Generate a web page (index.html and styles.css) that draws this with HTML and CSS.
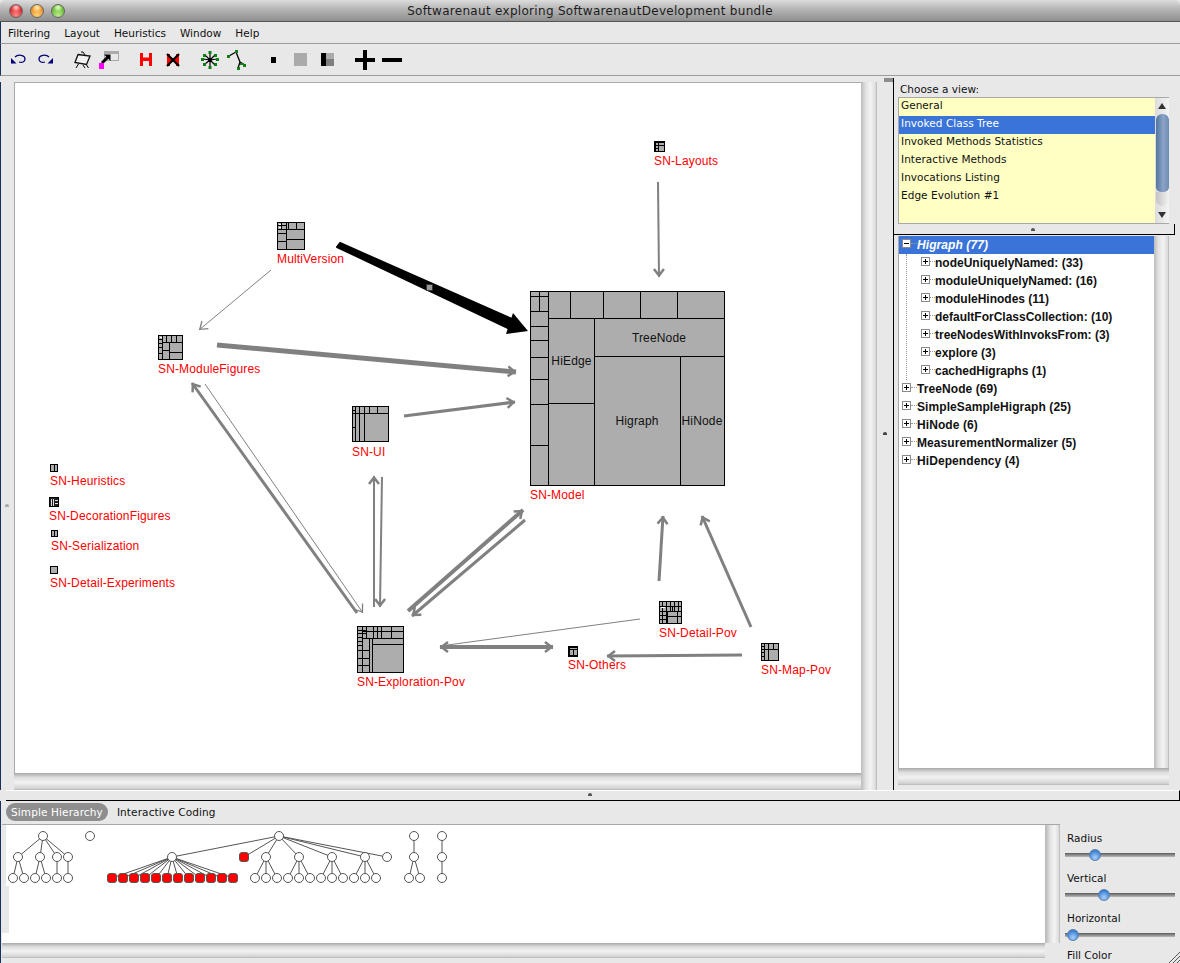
FILE: index.html
```html
<!DOCTYPE html>
<html lang="en">
<head>
<meta charset="utf-8">
<title>Softwarenaut exploring SoftwarenautDevelopment bundle</title>
<link rel="stylesheet" href="styles.css">
</head>
<body>
<div class="window">
  <header class="titlebar">
    <div class="lights"><span class="light red"></span><span class="light orange"></span><span class="light green"></span></div>
    <div class="title">Softwarenaut exploring SoftwarenautDevelopment bundle</div>
    <div></div>
  </header>
  <nav class="menubar">
    <span>Filtering</span><span>Layout</span><span>Heuristics</span><span>Window</span><span>Help</span>
  </nav>
  <div class="toolbar">
    <svg class="t-undo" width="15" height="12" viewBox="0 0 15 12"><path class="navy-s" d="M4 3C7 0 14 1 14 5C14 8 11 9 8 8"/><path class="navy-f" d="M0 4L5.500 9.500H0Z"/></svg>
    <svg class="t-redo" width="15" height="12" viewBox="0 0 15 12"><path class="navy-s" d="M11 3C8 0 1 1 1 5C1 8 4 9 7 8"/><path class="navy-f" d="M15 4L9.500 9.500H15Z"/></svg>
    <svg class="t-easel" width="17" height="18" viewBox="0 0 17 18"><path class="ink" d="M9 1L11 4M9 1L7 1M4.500 13L2 17M9 14L11 17M12 13L14.500 17"/><path class="easel" d="M4 3.500L16 5L12.500 13.500L1 11.500Z"/></svg>
    <svg class="t-arrow" width="20" height="18" viewBox="0 0 20 18"><rect class="frame" x="5.500" y="0.500" width="14" height="9"/><rect class="frame-top" x="5" y="0" width="15" height="3"/><path class="arrow-s" d="M3 12L9 6"/><path class="arrow-f" d="M5 3.500H11.500V10Z"/><rect class="pink" x="0" y="12" width="5" height="6"/></svg>
    <svg class="t-h" width="12" height="13" viewBox="0 0 12 13"><path class="red-f" d="M0 0H3V4.500H9V0H12V13H9V8H3V13H0Z"/></svg>
    <svg class="t-x" width="14" height="14" viewBox="0 0 14 14"><path class="red-f" d="M1 1H4V5H10V1H13V13H10V9H4V13H1Z"/><path class="cross" d="M1 1L13 13M13 1L1 13"/></svg>
    <svg class="t-radial" width="18" height="18" viewBox="0 0 18 18"><path class="ink-thin" d="M9 9L9 2M9 9L14 4M9 9L16 8M9 9L14 14M9 9L9 16M9 9L4 13M9 9L2 8M9 9L4 4"/><circle class="hub" cx="9" cy="9" r="2"/><g class="leafg"><rect x="7.500" y="0" width="3" height="3"/><rect x="13" y="3" width="3" height="3"/><rect x="15" y="7" width="3" height="3"/><rect x="13" y="12" width="3" height="3"/><rect x="7.500" y="15" width="3" height="3"/><rect x="2" y="12" width="3" height="3"/><rect x="0" y="7" width="3" height="3"/><rect x="2" y="3" width="3" height="3"/></g></svg>
    <svg class="t-tree" width="20" height="20" viewBox="0 0 20 20"><path class="ink-thin2" d="M9 2L2 6M9 2L13 12L18 15M13 12L11 18"/><g class="leafg"><rect x="0" y="5" width="3" height="3"/><rect x="8" y="0" width="3" height="3"/><rect x="16" y="14" width="3" height="3"/><rect x="10" y="17" width="3" height="3"/><rect x="13" y="13" width="3" height="2"/></g></svg>
    <svg class="t-small" width="5" height="6" viewBox="0 0 5 6"><rect class="black-f" width="5" height="6"/></svg>
    <svg class="t-gray" width="13" height="13" viewBox="0 0 13 13"><rect class="gray-f" width="13" height="13"/></svg>
    <svg class="t-split" width="13" height="13" viewBox="0 0 13 13"><rect class="gray-f" width="13" height="6"/><rect class="dark-f" y="6" width="13" height="7"/><rect class="black-f" width="5" height="13"/></svg>
    <svg class="t-plus" width="20" height="20" viewBox="0 0 20 20"><path class="black-f" d="M8 0H12V8H20V12H12V20H8V12H0V8H8Z"/></svg>
    <svg class="t-minus" width="20" height="4" viewBox="0 0 20 4"><rect class="black-f" width="20" height="4"/></svg>
  </div>

  <main class="main">
    <section class="left-pane">
      <div class="left-strip"><span class="grip-dot"></span></div>
      <div class="canvas-col">
        <svg class="canvas" width="846" height="690" viewBox="15 83 846 690">
          <defs>
            <marker id="ch" class="mk" markerUnits="userSpaceOnUse" markerWidth="20" markerHeight="20" refX="11.500" refY="10" orient="auto-start-reverse" viewBox="0 0 20 20"><path class="chev" d="M3.500 5L10 10L3.500 15"/></marker>
            <marker id="chs" markerUnits="userSpaceOnUse" markerWidth="20" markerHeight="20" refX="11" refY="10" orient="auto-start-reverse" viewBox="0 0 20 20"><path class="chev thin" d="M3 5L10 10L3 15"/></marker>
          </defs>

          <path class="edge w2" d="M658 182L659 277" marker-end="url(#ch)"/>
          <path class="edge w1" d="M271 270L199 330" marker-end="url(#chs)"/>
          <path class="edge w5" d="M217 345L516 372" marker-end="url(#ch)"/>
          <path class="edge w3" d="M404 416L515 402" marker-end="url(#ch)"/>
          <path class="edge w3" d="M192 383L357 613" marker-start="url(#ch)"/>
          <path class="edge w1" d="M205 384L363 613" marker-end="url(#chs)"/>
          <path class="edge w2" d="M374 476L374 607" marker-start="url(#ch)"/>
          <path class="edge w2" d="M382 477L380 607" marker-end="url(#ch)"/>
          <path class="edge w4" d="M408 611L523 510" marker-end="url(#ch)"/>
          <path class="edge w3" d="M525 520L412 616" marker-end="url(#ch)"/>
          <path class="edge w4" d="M440 647L553 647" marker-start="url(#ch)" marker-end="url(#ch)"/>
          <path class="edge w1" d="M640 619L440 646"/>
          <path class="edge w3" d="M742 655L607 656" marker-end="url(#ch)"/>
          <path class="edge w3" d="M659 581L663 516" marker-end="url(#ch)"/>
          <path class="edge w3" d="M751 627L702 516" marker-end="url(#ch)"/>

          <path class="bigedge" d="M337 247L340 243L512 319L508 328Z"/>
          <path class="bighead" d="M528 331L506 334L513 313Z"/>
          <rect class="bigmark" x="426.500" y="284.500" width="6" height="6"/>

          <!-- SN-Model -->
          <rect class="tm" x="530.500" y="291.500" width="194" height="194"/>
          <path class="tl" d="M548.500 291V485M548.500 318.500H724M570.500 291V318M603.500 291V318M640.500 291V318M677.500 291V318M530 296.500H548M530 311.500H548M530 326.500H548M530 340.500H548M530 357.500H548M530 379.500H548M530 404.500H548M530 445.500H548M539.500 291V311M594.500 318V485M594.500 356.500H724M680.500 356.500V485M548 403.500H594"/>
          <text class="node-name" x="659" y="342">TreeNode</text>
          <text class="node-name" x="571.500" y="365">HiEdge</text>
          <text class="node-name" x="637" y="425">Higraph</text>
          <text class="node-name" x="702" y="425">HiNode</text>

          <!-- MultiVersion -->
          <rect class="tm" x="277.500" y="222.500" width="27" height="27"/>
          <path class="tl" d="M286.500 222V250M286.500 229.500H304M288.500 222V230M296.500 222V230M286.500 239.500H304M278 225.500H286M278 229.500H286M278 233.500H286M278 241.500H286M281.500 222V230"/>
          <rect class="tm-w" x="279" y="224" width="2" height="1"/><rect class="tm-w" x="279" y="227" width="2" height="1"/>

          <!-- SN-ModuleFigures -->
          <rect class="tm" x="158.500" y="335.500" width="24" height="24"/>
          <path class="tl" d="M162.500 335V360M162.500 342.500H182M166.500 335V342M171.500 335V342M176.500 335V342M169.500 342V360M169.500 352.500H182M162 350.500H170M158 339.500H162M158 343.500H162M158 347.500H162M158 353.500H162"/>
          <rect class="tm-w" x="160" y="337" width="2" height="1"/>

          <!-- SN-UI -->
          <rect class="tm" x="352.500" y="406.500" width="36" height="35"/>
          <path class="tl" d="M353 413.500H388M355.500 406V442M359.500 406V442M364.500 406V442M369.500 406V414M377.500 406V414M353 427.500H355M353 410.500H355"/>

          <!-- SN-Exploration-Pov -->
          <rect class="tm" x="357.500" y="626.500" width="46" height="46"/>
          <path class="tl" d="M362.500 626V672M362.500 638.500H403M358 630.500H366M358 633.500H366M366.500 626V638M373.500 626V638M377.500 626V638M381.500 626V638M391.500 626V638M362 631.500H403M369.500 638V672M372.500 638V672M372.500 644.500H403M358 637.500H362M358 641.500H362M358 645.500H362M358 650.500H362M358 658.500H369M358 665.500H369M362 650.500H369"/>

          <!-- SN-Detail-Pov -->
          <rect class="tm" x="659.500" y="601.500" width="22" height="22"/>
          <path class="tl" d="M666.500 601V623M659 606.500H682M670.500 601V612M674.500 601V612M678.500 601V612M662.500 601V623M659 611.500H682M659 615.500H667M659 619.500H667M667 616.500H682M667 612V623M677.500 612V623M672.500 607V612"/>
          <rect class="tm-w" x="661" y="607" width="4" height="1"/>

          <!-- SN-Map-Pov -->
          <rect class="tm" x="761.500" y="643.500" width="17" height="17"/>
          <path class="tl" d="M764.500 643V661M764.500 649.500H778M768.500 643V661M773.500 643V650M761 646.500H765M761 649.500H765M761 652.500H765M761 656.500H765"/>

          <!-- SN-Others -->
          <rect class="tm-b" x="568.800" y="647.200" width="8.800" height="8.800"/>
          <path class="tl" d="M570 649.500H577M573.500 650V656"/>

          <!-- SN-Layouts -->
          <rect class="tm-b" x="654.800" y="141.800" width="9.800" height="9.800"/>
          <path class="tl" d="M655 145.500H664M658.500 142V152M655 148.500H658"/>

          <!-- isolated -->
          <rect class="tm-b" x="50.500" y="464.500" width="7" height="7"/><path class="tl" d="M54.500 464V471"/>
          <rect class="tm-d" x="49.500" y="497.500" width="9" height="9"/><path class="tl-w" d="M51.500 499V506M53.500 499V506M55 500.500H58M55 503.500H58"/>
          <rect class="tm-b" x="51.500" y="530.500" width="6" height="6"/><path class="tl" d="M54.500 530V537"/>
          <rect class="tm-b" x="50.500" y="566.500" width="7" height="7"/>

          <text class="lbl" x="654" y="165">SN-Layouts</text>
          <text class="lbl" x="277" y="263">MultiVersion</text>
          <text class="lbl" x="158" y="373">SN-ModuleFigures</text>
          <text class="lbl" x="352" y="456">SN-UI</text>
          <text class="lbl" x="530" y="499">SN-Model</text>
          <text class="lbl" x="50" y="485">SN-Heuristics</text>
          <text class="lbl" x="49" y="520">SN-DecorationFigures</text>
          <text class="lbl" x="51" y="550">SN-Serialization</text>
          <text class="lbl" x="50" y="587">SN-Detail-Experiments</text>
          <text class="lbl" x="357" y="686">SN-Exploration-Pov</text>
          <text class="lbl" x="568" y="669">SN-Others</text>
          <text class="lbl" x="659" y="637">SN-Detail-Pov</text>
          <text class="lbl" x="761" y="674">SN-Map-Pov</text>
        </svg>
        <div class="hscroll"></div>
      </div>
      <div class="vscroll"></div>
      <div class="vsplit"><span class="vsplit-cap"></span><span class="grip-dot"></span></div>
    </section>

    <aside class="right-pane">
      <div class="choose">Choose a view:</div>
      <div class="list-box">
        <ul class="view-list">
          <li>General</li>
          <li class="sel">Invoked Class Tree</li>
          <li>Invoked Methods Statistics</li>
          <li>Interactive Methods</li>
          <li>Invocations Listing</li>
          <li>Edge Evolution #1</li>
        </ul>
        <div class="list-sb">
          <span class="arrow-up"></span>
          <span class="thumb"></span>
          <span class="thumb-cap"></span>
          <span class="arrow-down"></span>
        </div>
      </div>
      <div class="hsplit-mini"><span class="grip-dot"></span></div>
      <div class="tree-box">
        <div class="tree">
          <div class="row top sel-row"><span class="box minus"></span><span class="dots"></span><span class="name-sel">Higraph (77)</span></div>
          <div class="children">
            <div class="row"><span class="box"></span><span class="dots"></span><span>nodeUniquelyNamed: (33)</span></div>
            <div class="row"><span class="box"></span><span class="dots"></span><span>moduleUniquelyNamed: (16)</span></div>
            <div class="row"><span class="box"></span><span class="dots"></span><span>moduleHinodes (11)</span></div>
            <div class="row"><span class="box"></span><span class="dots"></span><span>defaultForClassCollection: (10)</span></div>
            <div class="row"><span class="box"></span><span class="dots"></span><span>treeNodesWithInvoksFrom: (3)</span></div>
            <div class="row"><span class="box"></span><span class="dots"></span><span>explore (3)</span></div>
            <div class="row"><span class="box"></span><span class="dots"></span><span>cachedHigraphs (1)</span></div>
          </div>
          <div class="row top"><span class="box"></span><span class="dots"></span><span>TreeNode (69)</span></div>
          <div class="row top"><span class="box"></span><span class="dots"></span><span>SimpleSampleHigraph (25)</span></div>
          <div class="row top"><span class="box"></span><span class="dots"></span><span>HiNode (6)</span></div>
          <div class="row top"><span class="box"></span><span class="dots"></span><span>MeasurementNormalizer (5)</span></div>
          <div class="row top"><span class="box"></span><span class="dots"></span><span>HiDependency (4)</span></div>
        </div>
        <div class="vscroll tree-sb"></div>
      </div>
      <div class="hscroll tree-hs"></div>
    </aside>
  </main>

  <div class="hsplit"><span class="grip-dot"></span></div>

  <section class="bottom">
    <div class="bottom-left">
      <div class="tabs"><span class="tab active">Simple Hierarchy</span><span class="tab">Interactive Coding</span></div>
      <div class="tree-area">
        <svg class="forest" width="1043" height="118" viewBox="2 825 1043 118">
          <defs>
            <circle id="n" class="nd" r="4.500"/>
            <rect id="r" class="rd" x="-4.500" y="-4.500" width="9" height="9" rx="2.500"/>
          </defs>
          <rect class="notch" x="2" y="825" width="4" height="108"/>
          <rect class="notch" x="6" y="886" width="3" height="47"/>
          <path class="lk" d="M43 836L18 857M43 836L40 857M43 836L57 857M43 836L68 857M18 857L13 878M18 857L24 878M40 857L35 878M40 857L46 878M57 857V878M68 857V878"/>
          <path class="lk" d="M279 836L172 857M279 836L244 857M279 836L266 857M279 836L299 857M279 836L332 857M279 836L365 857M279 836L387 857"/>
          <path class="lk" d="M172 857L112 878M172 857L123 878M172 857L134 878M172 857L145 878M172 857L156 878M172 857L167 878M172 857L178 878M172 857L189 878M172 857L200 878M172 857L211 878M172 857L222 878M172 857L233 878"/>
          <path class="lk" d="M266 857L255 878M266 857V878M266 857L277 878M299 857L288 878M299 857V878M299 857L310 878M332 857L321 878M332 857V878M332 857L343 878M365 857L354 878M365 857V878M365 857L376 878"/>
          <path class="lk" d="M414 836V857M414 857L409 878M414 857L420 878M442 836V878"/>
          <use href="#n" x="43" y="836"/><use href="#n" x="18" y="857"/><use href="#n" x="40" y="857"/><use href="#n" x="57" y="857"/><use href="#n" x="68" y="857"/>
          <use href="#n" x="13" y="878"/><use href="#n" x="24" y="878"/><use href="#n" x="35" y="878"/><use href="#n" x="46" y="878"/><use href="#n" x="57" y="878"/><use href="#n" x="68" y="878"/>
          <use href="#n" x="90" y="836"/>
          <use href="#n" x="279" y="836"/><use href="#n" x="172" y="857"/><use href="#r" x="244" y="857"/><use href="#n" x="266" y="857"/><use href="#n" x="299" y="857"/><use href="#n" x="332" y="857"/><use href="#n" x="365" y="857"/><use href="#n" x="387" y="857"/>
          <use href="#r" x="112" y="878"/><use href="#r" x="123" y="878"/><use href="#r" x="134" y="878"/><use href="#r" x="145" y="878"/><use href="#r" x="156" y="878"/><use href="#r" x="167" y="878"/><use href="#r" x="178" y="878"/><use href="#r" x="189" y="878"/><use href="#r" x="200" y="878"/><use href="#r" x="211" y="878"/><use href="#r" x="222" y="878"/><use href="#r" x="233" y="878"/>
          <use href="#n" x="255" y="878"/><use href="#n" x="266" y="878"/><use href="#n" x="277" y="878"/><use href="#n" x="288" y="878"/><use href="#n" x="299" y="878"/><use href="#n" x="310" y="878"/><use href="#n" x="321" y="878"/><use href="#n" x="332" y="878"/><use href="#n" x="343" y="878"/><use href="#n" x="354" y="878"/><use href="#n" x="365" y="878"/><use href="#n" x="376" y="878"/>
          <use href="#n" x="414" y="836"/><use href="#n" x="414" y="857"/><use href="#n" x="409" y="878"/><use href="#n" x="420" y="878"/>
          <use href="#n" x="442" y="836"/><use href="#n" x="442" y="857"/><use href="#n" x="442" y="878"/>
        </svg>
        <div class="vscroll forest-sb"></div>
      </div>
      <div class="hscroll forest-hs"></div>
    </div>
    <div class="controls">
      <div class="ctl"><div class="ctl-label">Radius</div><div class="slider"><span class="knob k-radius"></span></div></div>
      <div class="ctl"><div class="ctl-label">Vertical</div><div class="slider"><span class="knob k-vertical"></span></div></div>
      <div class="ctl"><div class="ctl-label">Horizontal</div><div class="slider"><span class="knob k-horizontal"></span></div></div>
      <div class="ctl ctl-fill"><div class="ctl-label">Fill Color</div></div>
      <svg class="resize" width="12" height="12" viewBox="0 0 12 12"><path class="grip" d="M1 12L12 1M5 12L12 5M9 12L12 9"/></svg>
    </div>
  </section>
</div>
</body>
</html>
```

FILE: styles.css
```css
* { box-sizing: border-box; }
html, body { margin: 0; padding: 0; background: #fff; }
body { width: 1180px; height: 963px; overflow: hidden; font-family: "DejaVu Sans", sans-serif; font-size: 10.5px; color: #000; }
ul { list-style: none; margin: 0; padding: 0; }

.window { width: 1180px; height: 963px; display: flex; flex-direction: column; background: #e8e8e8; overflow: hidden; position: relative; }

/* title */
.titlebar { height: 22px; flex: none; display: grid; grid-template-columns: 1fr auto 1fr; align-items: center; padding-top: 1px; background: linear-gradient(#dcdcdc, #b8b8b8 40%, #8e8e8e); border-bottom: 1px solid #555; border-radius: 5px 5px 0 0; }
.lights { display: flex; gap: 7px; padding-left: 9px; }
.light { width: 14px; height: 14px; border-radius: 50%; border: 1px solid #666; }
.light.red { background: radial-gradient(circle at 50% 22%, #ffd6d6, #ff7a7a 22%, transparent 45%), radial-gradient(circle at 50% 85%, #ff8a8a, #d62a2a 65%, #a01c1c); }
.light.orange { background: radial-gradient(circle at 50% 22%, #fff0c8, #ffc870 22%, transparent 45%), radial-gradient(circle at 50% 85%, #ffd27a, #e8902a 65%, #b06a14); }
.light.green { background: radial-gradient(circle at 50% 22%, #e6ffd0, #a8e27a 22%, transparent 45%), radial-gradient(circle at 50% 85%, #b8ec8a, #6cb83a 65%, #468a22); }
.title { font-size: 12px; color: #1c1c1c; letter-spacing: 0.3px; }

/* menu */
.menubar { height: 22px; flex: none; display: flex; gap: 14px; padding: 0 0 0 7px; align-items: center; border-bottom: 1px solid #9c9c9c; border-left: 1px solid #1b2f5c; color: #111; }

/* toolbar */
.toolbar { height: 32px; flex: none; display: flex; align-items: center; padding-left: 10px; border-bottom: 1px solid #9c9c9c; border-left: 1px solid #1b2f5c; }
.toolbar svg { flex: none; display: block; }
.t-redo { margin-left: 12px; }
.t-easel { margin-left: 21px; }
.t-arrow { margin-left: 8px; }
.t-h { margin-left: 21px; }
.t-x { margin-left: 14px; }
.t-radial { margin-left: 21px; }
.t-tree { margin-left: 8px; }
.t-small { margin-left: 24px; }
.t-gray { margin-left: 18px; }
.t-split { margin-left: 14px; }
.t-plus { margin-left: 21px; }
.t-minus { margin-left: 7px; }
.navy-s { fill: none; stroke: #00007a; stroke-width: 1.300; }
.navy-f { fill: #00007a; }
.ink { fill: none; stroke: #000; stroke-width: 1; }
.easel { fill: #f2f2f2; stroke: #111; stroke-width: 1.300; }
.frame { fill: #e8e8e8; stroke: #aaa; }
.frame-top { fill: #aaa; }
.arrow-s { stroke: #000; stroke-width: 3; fill: none; }
.arrow-f { fill: #000; }
.pink { fill: #f0f; }
.red-f { fill: #f00; }
.cross { stroke: #000; stroke-width: 2.200; fill: none; }
.ink-thin { stroke: #000; stroke-width: 1.200; fill: none; }
.ink-thin2 { stroke: #000; stroke-width: 1.300; fill: none; }
.hub { fill: #000; }
.leafg rect { fill: #0a7f12; }
.black-f { fill: #000; }
.gray-f { fill: #aaa; }
.dark-f { fill: #808080; }

/* main */
.main { height: 714px; flex: none; display: flex; }
.left-pane { width: 893px; flex: none; display: flex; padding-top: 6px; }
.left-strip { width: 14px; flex: none; border-left: 1px solid #1b2f5c; display: flex; justify-content: flex-start; padding: 422px 0 0 4px; }
.left-strip .grip-dot { background: #aaa; }
.canvas-col { width: 847px; flex: none; display: flex; flex-direction: column; }
.canvas { display: block; background: #fff; box-sizing: content-box; border-left: 1px solid #aaa; border-top: 1px solid #aaa; }
.hscroll { height: 17px; flex: none; background: linear-gradient(#a8a8a8, #dcdcdc 25%, #f2f2f2 55%, #d4d4d4 90%, #b4b4b4); }
.vscroll { width: 16px; flex: none; background: linear-gradient(90deg, #bcbcbc, #e2e2e2 30%, #f4f4f4 60%, #dcdcdc 90%, #b0b0b0); }
.vsplit { width: 16px; flex: none; display: flex; flex-direction: column; align-items: center; margin-top: -4px; }
.vsplit-cap { width: 9px; height: 4px; background: #8c8c8c; margin-left: 6px; }
.vsplit .grip-dot { margin-top: 350px; margin-left: -1px; background: #444; }
.grip-dot { display: block; width: 4px; height: 3px; background: #555; border-radius: 2px 2px 0 0; }

/* edges */
.edge { fill: none; stroke: #808080; }
.w1 { stroke-width: 1; }
.w2 { stroke-width: 2; }
.w3 { stroke-width: 3; }
.w4 { stroke-width: 4; }
.w5 { stroke-width: 5; }
.chev { fill: none; stroke: #808080; stroke-width: 2.500; }
.chev.thin { stroke-width: 1.300; }
.bigedge { fill: #000; stroke: #000; stroke-width: 2; stroke-linejoin: round; }
.bighead { fill: #000; }
.bigmark { fill: #999; stroke: #333; stroke-width: 1; }

/* treemaps */
.tm { fill: #adadad; stroke: #000; stroke-width: 1; shape-rendering: crispEdges; }
.tm-b { fill: #adadad; stroke: #000; stroke-width: 1.500; shape-rendering: crispEdges; }
.tm-d { fill: #222; stroke: #000; stroke-width: 1; shape-rendering: crispEdges; }
.tm-w { fill: #fff; }
.tl { fill: none; stroke: #000; stroke-width: 1; shape-rendering: crispEdges; }
.tl-w { fill: none; stroke: #ddd; stroke-width: 1; shape-rendering: crispEdges; }
.node-name { font: 12px "Liberation Sans", sans-serif; fill: #111; text-anchor: middle; letter-spacing: 0.15px; }
.lbl { font: 12px "Liberation Sans", sans-serif; fill: #f00; letter-spacing: 0.15px; }

/* right */
.right-pane { width: 287px; flex: none; margin-top: 2px; border-left: 1px solid #000; padding-left: 4px; display: flex; flex-direction: column; }
.choose { height: 19px; padding: 4px 0 0 2px; color: #111; line-height: 14px; }
.list-box { width: 271px; height: 127px; display: flex; border: 1px solid #a8a8a8; margin-right: auto; flex: none; }
.view-list { width: 256px; flex: none; background: #ffffc4; letter-spacing: 0.04px; }
.view-list li { height: 18px; padding-left: 2px; line-height: 15px; color: #111; }
.view-list .sel { background: #3b74d8; color: #fff; }
.list-sb { width: 14px; flex: none; display: flex; flex-direction: column; align-items: center; background: linear-gradient(90deg, #dcdcdc, #f4f4f4); }
.arrow-up, .arrow-down { width: 14px; height: 16px; flex: none; display: flex; align-items: center; justify-content: center; }
.arrow-up::before { content: ""; border: 4px solid transparent; border-bottom: 6px solid #333; border-top: 0; }
.arrow-down::before { content: ""; border: 4px solid transparent; border-top: 6px solid #333; border-bottom: 0; }
.thumb { width: 13px; height: 78px; flex: none; border-radius: 6px 6px 5px 5px; background: linear-gradient(90deg, #54759f, #8ba3c6 55%, #6f8cb2); }
.thumb-cap { width: 13px; height: 14px; flex: none; border-radius: 0 0 7px 7px; background: linear-gradient(90deg, #c4c4c4, #f2f2f2); margin-bottom: 1px; }
.hsplit-mini { height: 11px; margin: 0 0 1px -4px; width: 281px; flex: none; border-right: 1px solid #000; border-bottom: 1px solid #000; display: flex; justify-content: center; align-items: center; padding-right: 3px; background: #e8e8e8; }
.tree-box { width: 271px; height: 532px; flex: none; display: flex; border-left: 1px solid #a8a8a8; }
.tree { width: 255px; flex: none; background: #fff; font: bold 12px "Liberation Sans", sans-serif; color: #111; letter-spacing: 0.08px; }
.tree-sb { width: 15px; }
.tree-hs { width: 271px; }
.row { height: 18px; display: flex; align-items: center; white-space: nowrap; }
.row.top { padding-left: 3px; }
.sel-row { background: #3b74d8; }
.name-sel { color: #fff; font-style: italic; }
.box { width: 9px; height: 9px; flex: none; margin-top: -4px; border: 1px solid #8a8a8a; background: linear-gradient(#000, #000) center / 5px 1px no-repeat, linear-gradient(#000, #000) center / 1px 5px no-repeat, #fff; }
.box.minus { background: linear-gradient(#000, #000) center / 5px 1px no-repeat, #fff; }
.dots { width: 6px; flex: none; margin-top: -4px; border-top: 1px dotted #999; }
.children { margin-left: 7px; border-left: 1px dotted #999; height: 126px; letter-spacing: 0; }
.children .row { padding-left: 14px; }
.children .dots { width: 5px; }

/* split */
.hsplit { height: 11px; flex: none; margin-left: 6px; border-top: 1px solid #fff; border-bottom: 1px solid #000; border-right: 1px solid #000; display: flex; justify-content: center; padding-right: 6px; align-items: center; }
.hsplit .grip-dot { margin-top: -2px; }

/* bottom */
.bottom { flex: 1; display: flex; min-height: 0; border-left: 1px solid #1b2f5c; }
.bottom-left { width: 1059px; flex: none; padding-left: 1px; display: flex; flex-direction: column; }
.tabs { height: 24px; flex: none; display: flex; align-items: center; gap: 4px; padding: 0 0 2px 4px; border-bottom: 1px solid #a8a8a8; letter-spacing: 0.12px; }
.tab { padding: 0 5px; line-height: 18px; color: #111; }
.tab.active { background: #8e8e8e; color: #fff; border-radius: 9px; }
.tree-area { height: 118px; flex: none; display: flex; }
.forest { display: block; flex: none; background: #fff; }
.forest-sb { width: 15px; height: 118px; border-left: 1px solid #bbb; }
.forest-hs { height: 15px; width: 1043px; }
.notch { fill: #e8e8e8; }
.lk { fill: none; stroke: #555; stroke-width: 1; }
.nd { fill: #fff; stroke: #555; stroke-width: 1; }
.rd { fill: #f00; stroke: #555; stroke-width: 1; }

/* controls */
.controls { flex: 1; padding: 29px 5px 0 5px; display: flex; flex-direction: column; overflow: hidden; position: relative; }
.ctl { height: 40px; flex: none; }
.ctl-fill { height: 12px; margin-top: -3px; overflow: hidden; }
.ctl-label { height: 16px; line-height: 16px; padding-left: 2px; color: #111; }
.slider { height: 18px; display: flex; align-items: center; background: linear-gradient(#5a5a5a, #bbb) center / 100% 4px no-repeat; border-radius: 2px; }
.knob { width: 12px; height: 12px; flex: none; border-radius: 50%; border: 1px solid #5f7faa; background: radial-gradient(circle at 50% 75%, #a9d0fa, #3f83d8 70%, #2a63b0); }
.k-radius { margin-left: 24px; }
.k-vertical { margin-left: 33px; }
.k-horizontal { margin-left: 2px; }
.resize { position: absolute; right: 0; bottom: 0; }
.grip { fill: none; stroke: #555; stroke-width: 1; }
```
